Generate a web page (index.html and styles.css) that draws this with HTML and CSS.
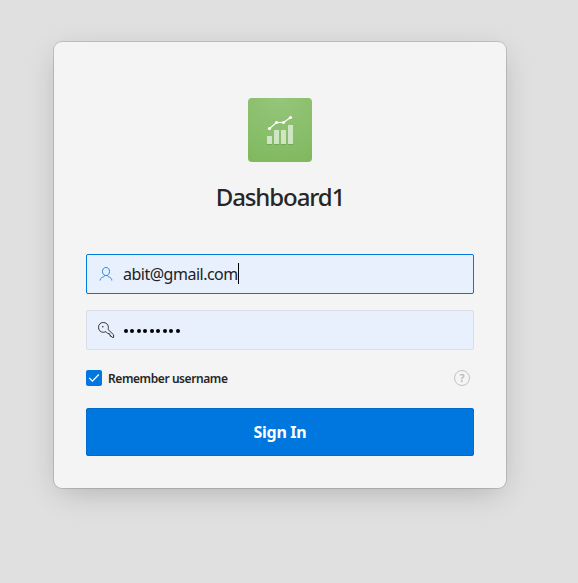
FILE: index.html
```
<!DOCTYPE html>
<html lang="en">
<head>
<meta charset="utf-8">
<title>Dashboard1</title>
<link rel="stylesheet" href="styles.css">
</head>
<body>
<main class="card">
  <div class="logo">
    <svg width="64" height="64" viewBox="0 0 64 64" aria-hidden="true">
      <path d="M19 46h5v1h-5zM26 46h5v1h-5zM33 46h5v1h-5zM40 46h5v1h-5z" fill="#000" fill-opacity=".12"/>
      <path d="M19 38h5v8h-5zM26 32h5v14h-5zM33 32h5v14h-5zM40 27h5v19h-5z" fill="#fff" fill-opacity=".6"/>
      <path d="M21.500 30.500 28.500 24.500H35.500L42.500 19.500" fill="none" stroke="#fff" stroke-width="1.200"/>
      <g fill="#fff"><circle cx="21.500" cy="30.500" r="1.600"/><circle cx="28.500" cy="24.500" r="1.600"/><circle cx="35.500" cy="24.500" r="1.600"/><circle cx="42.500" cy="19.500" r="1.600"/></g>
    </svg>
  </div>
  <h1 class="title">Dashboard1</h1>
  <form class="form">
    <div class="field field-active">
      <svg class="icon user" width="16" height="16" viewBox="0 0 16 16" fill="none" aria-hidden="true"><path d="M8 1.500C5.700 1.500 4.500 3.100 4.500 5.500S6 9.500 8 9.500 11.500 7.900 11.500 5.500 10.300 1.500 8 1.500ZM6.500 9.200V9.800C6.500 11.200 2.200 10.800 2.200 14.500M9.500 9.200V9.800C9.500 11.200 13.800 10.800 13.800 14.500"/></svg>
      <span class="value">abit@gmail.com</span><span class="caret"></span>
    </div>
    <div class="field">
      <svg class="icon key" width="18" height="18" viewBox="0 0 18 18" fill="none" aria-hidden="true"><path d="M6.300 1.500C3.500 1.500 1.500 3.500 1.500 6.300S3.500 11.300 6.300 11.300C7.500 11.300 8.300 11 8.900 10.600L10.700 12.500H12.300V13.900L13.500 14.100V15.400L14.900 15.600 15.400 16.500H16.600V13.800L11 8.400C11.300 7.800 11.400 7.100 11.400 6.300 11.400 3.500 9.100 1.500 6.300 1.500Z"/><circle class="hole" cx="5.800" cy="5.800" r=".8"/></svg>
      <span class="dots"><i></i><i></i><i></i><i></i><i></i><i></i><i></i><i></i><i></i></span>
    </div>
    <div class="options">
      <span class="check"><svg width="16" height="16" viewBox="0 0 16 16" fill="none" aria-hidden="true"><path d="M3.200 7.900 6.400 11.100 12.800 4.500" stroke="#fff" stroke-width="1.300"/></svg></span>
      <span class="remember">Remember username</span>
      <span class="help">?</span>
    </div>
    <button class="signin" type="button">Sign In</button>
  </form>
</main>
</body>
</html>
```

FILE: styles.css
```
* { box-sizing: border-box; }
body {
  margin: 0;
  height: 583px;
  padding: 42px 0 0 54px;
  overflow: hidden;
  background: #e0e0e0;
  color: #262626;
  font-family: "Noto Sans", "Open Sans", sans-serif;
}
.card {
  width: 452px;
  height: 446px;
  padding: 56px 32px 32px;
  border-radius: 8px;
  background: #f4f4f4;
  box-shadow: 0 0 0 1px rgba(0,0,0,.13), 0 8px 32px -6px rgba(0,0,0,.23);
}
.logo {
  width: 64px;
  height: 64px;
  margin: 0 auto;
  border-radius: 4px;
  background: radial-gradient(circle at 50% 0, #95c67a, #7fb85e);
}
.logo svg { display: block; }
.title {
  height: 32px;
  margin: 19px 0 41px;
  font-size: 24px;
  line-height: 32px;
  font-weight: 500;
  letter-spacing: -1.1px;
  text-align: center;
}
.field {
  display: flex;
  align-items: center;
  height: 40px;
  margin-bottom: 16px;
  padding-left: 11px;
  border: 1px solid #dbdfe5;
  border-radius: 2px;
  background: #e8f0fe;
}
.field-active { border-color: #0076df; }
.icon { flex: none; stroke: #333; stroke-width: 1; }
.user { stroke: #2688e5; }
.key { margin-left: -1px; }
.hole { fill: #333; stroke: none; }
.value { margin-left: 9px; font-size: 16px; line-height: 24px; letter-spacing: -.5px; color: #222; }
.caret { width: 1px; height: 21px; margin-top: -1px; background: #000; }
.dots { display: flex; gap: 2.500px; margin: 1px 0 0 8.500px; }
.dots i { width: 4px; height: 4px; border-radius: 50%; background: #000; }
.options { display: flex; align-items: center; height: 24px; margin-bottom: 18px; padding-right: 4px; }
.check { width: 16px; height: 16px; border-radius: 2px; background: #0076df; }
.check svg { display: block; }
.remember { margin: 2px 0 0 6px; font-size: 12px; line-height: 16px; font-weight: 600; letter-spacing: -.42px; }
.help {
  width: 16px;
  height: 16px;
  margin-left: auto;
  border: 1px solid #c3c3c3;
  border-radius: 50%;
  color: #b7b7b7;
  font-size: 11px;
  line-height: 14px;
  font-weight: 600;
  text-align: center;
}
.signin {
  display: block;
  width: 100%;
  height: 48px;
  padding: 0;
  border: 1px solid #006cd0;
  border-radius: 2px;
  background: #0076df;
  color: #fff;
  font: 700 16px/24px "Noto Sans", "Open Sans", sans-serif;
  letter-spacing: -.3px;
}
```
